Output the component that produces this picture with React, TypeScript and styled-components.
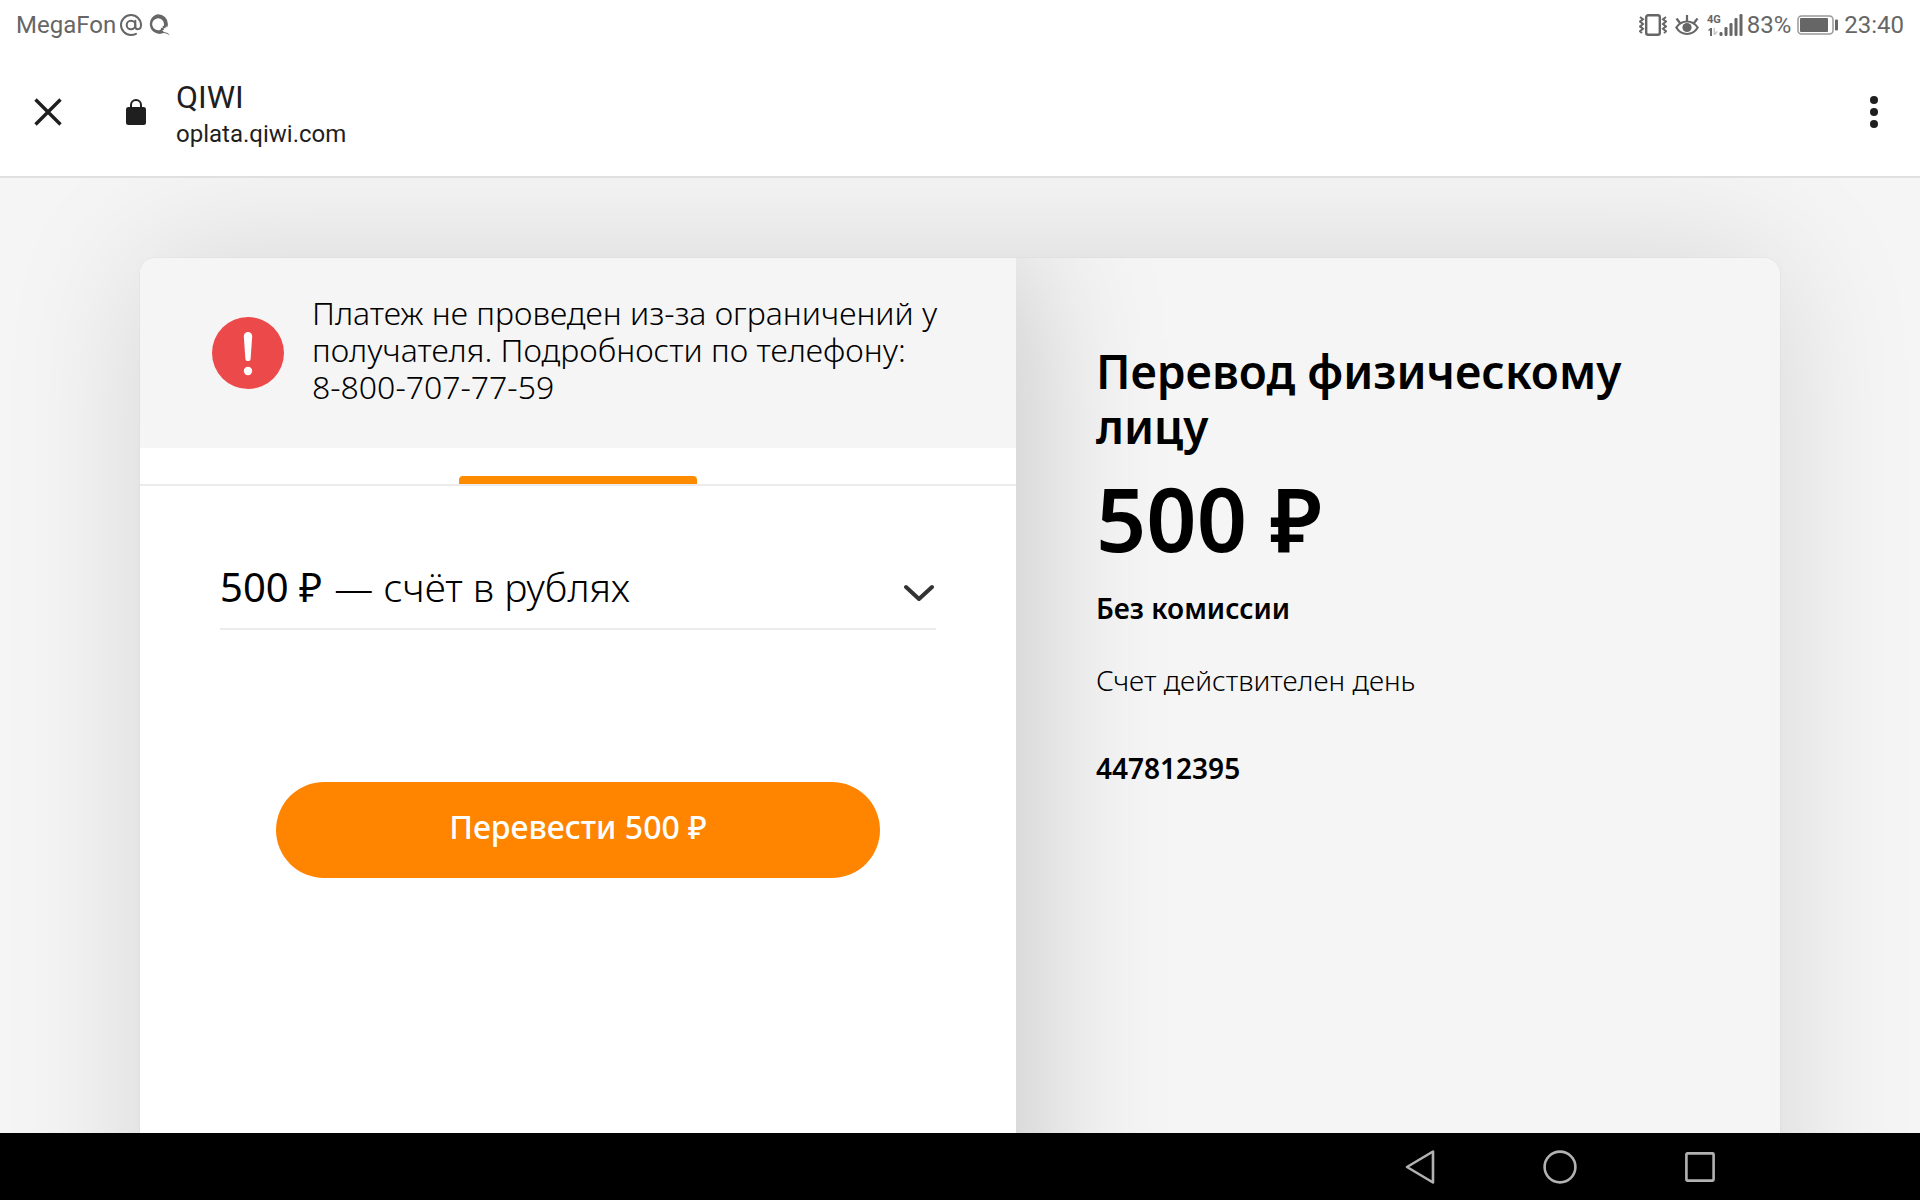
import React from "react";
import styled, { createGlobalStyle } from "styled-components";

const GlobalStyle = createGlobalStyle`
  *, *::before, *::after { box-sizing: border-box; }
  body { margin: 0; background: #f5f5f5; color: #000; }
  h1, p { margin: 0; font-weight: inherit; }
  button { border: 0; padding: 0; background: none; font: inherit; color: inherit; cursor: pointer; }
`;

const pageFont = `"Noto Sans", "Open Sans", sans-serif`;
const systemFont = `Roboto, "Noto Sans", sans-serif`;

const Screen = styled.div`
  display: flex;
  flex-direction: column;
  height: 100vh;
  overflow: hidden;
  font-family: ${pageFont};
  svg { display: block; flex: none; }
`;

const StatusBar = styled.div`
  display: flex;
  justify-content: space-between;
  align-items: center;
  height: 48px;
  padding: 2px 16px 0;
  background: #fff;
  color: #666;
  font: 400 24px/24px ${systemFont};
`;

const StatusGroup = styled.div<{ $gap: number }>`
  display: flex;
  align-items: center;
  gap: ${(p) => p.$gap}px;
`;

const Toolbar = styled.header`
  display: flex;
  align-items: center;
  height: 130px;
  padding: 0 20px 0 22px;
  background: #fff;
  border-bottom: 2px solid #e0e0e0;
  color: #1f1f1f;
  font-family: ${systemFont};
`;

const IconButton = styled.button`
  display: flex;
  align-items: center;
  justify-content: center;
  width: 52px;
  height: 52px;
`;

const Site = styled.div`
  display: flex;
  align-items: center;
  flex: 1;
  gap: 30px;
  padding-left: 52px;
`;

const SiteText = styled.div`
  padding-top: 6px;
`;

const SiteTitle = styled.div`
  font-size: 32px;
  line-height: 38px;
`;

const SiteHost = styled.div`
  font-size: 24px;
  line-height: 36px;
`;

const Page = styled.main`
  display: flex;
  flex-direction: column;
  flex: 1;
  min-height: 0;
  padding: 80px 140px 0;
  overflow: hidden;
`;

const Card = styled.div`
  display: grid;
  grid-template-columns: minmax(0, 876fr) minmax(0, 764fr);
  flex: 1 0 auto;
  min-height: 100vh;
  border-radius: 16px;
  background: #f5f5f5;
  box-shadow: 0 0 0 1px rgba(0, 0, 0, 0.02), 0 0 140px rgba(0, 0, 0, 0.13);
  overflow: hidden;
`;

const Payment = styled.section`
  z-index: 1;
  background: #fff;
  box-shadow: 0 0 140px rgba(0, 0, 0, 0.22);
`;

const Alert = styled.div`
  display: flex;
  align-items: center;
  gap: 28px;
  min-height: 190px;
  padding: 0 76px 0 72px;
  background: #f5f5f5;
`;

const AlertText = styled.p`
  flex: 1;
  padding-bottom: 8px;
  font-size: 32px;
  font-weight: 300;
  line-height: 37px;
`;

const Tabs = styled.div`
  display: flex;
  justify-content: center;
  align-items: flex-end;
  height: 38px;
  border-bottom: 2px solid #ececec;
`;

const ActiveTab = styled.div`
  width: 238px;
  height: 8px;
  border-radius: 4px 4px 0 0;
  background: #ff8c00;
`;

const Form = styled.form`
  display: flex;
  flex-direction: column;
  gap: 152px;
  padding: 71px 80px;
`;

const Account = styled.label`
  display: flex;
  align-items: baseline;
  gap: 12px;
  padding-bottom: 11px;
  border-bottom: 2px solid #ececec;
  font-size: 40px;
  line-height: 60px;
`;

const AccountSum = styled.span`
  font-weight: 400;
  white-space: nowrap;
`;

const AccountSelect = styled.select`
  appearance: none;
  flex: 1;
  min-width: 0;
  height: 60px;
  padding: 0;
  border: 0;
  background: transparent;
  color: inherit;
  font: 300 39px/60px ${pageFont};
`;

const PayButton = styled.button`
  height: 96px;
  margin: 0 56px;
  padding-bottom: 8px;
  border-radius: 48px;
  background: #ff8400;
  color: #fff;
  font-size: 32px;
  font-weight: 500;
`;

const Summary = styled.aside`
  padding: 86px 80px;
`;

const Heading = styled.h1`
  font-size: 46px;
  font-weight: 600;
  line-height: 55px;
`;

const Amount = styled.p`
  margin-top: 20px;
  font-size: 88px;
  font-weight: 600;
  line-height: 88px;
`;

const Detail = styled.p<{ $weight: number; $space: number }>`
  margin-top: ${(p) => p.$space}px;
  font-size: 28px;
  font-weight: ${(p) => p.$weight};
  line-height: 40px;
`;

const SystemNav = styled.nav`
  display: flex;
  justify-content: flex-end;
  align-items: center;
  gap: 88px;
  height: 67px;
  padding-right: 194px;
  background: #000;
`;

const VibrateIcon = () => (
  <svg width="28" height="22" viewBox="0 0 28 22" fill="none" stroke="#666" strokeWidth="2">
    <rect x="7.2" y="1.2" width="13.6" height="19.6" rx="2" strokeWidth="2.4" />
    <path d="M1 3l3 2.200-3 2.400 3 2.400-3 2.400 3 2.400L1 17.200l2 1.800M27 3l-3 2.200 3 2.400-3 2.400 3 2.400-3 2.400 3 2.400-2 1.800" />
  </svg>
);

const EyeIcon = () => (
  <svg width="24" height="22" viewBox="0 0 24 22" fill="none" stroke="#666" strokeWidth="2.2">
    <path d="M1.3 13.5C4 9.5 8 7.5 12 7.5s8 2 10.700 6C20 18 16 20 12 20s-8-2-10.700-6.500z" />
    <path d="M12 1v6M1.500 4.500l3.500 4.500M22.500 4.500L19 9" />
    <circle cx="12" cy="13.5" r="4.6" fill="#666" stroke="none" />
  </svg>
);

const SignalIcon = () => (
  <svg width="36" height="22" viewBox="0 0 36 22" fill="#666">
    <text x="0" y="9" fontFamily="Roboto, sans-serif" fontSize="11" fontWeight="700">4G</text>
    <path d="M3 22v-5.500H.5L3.500 14H5v8z" />
    <path d="M6.500 14H8v3.500h3L8.500 21H6.500z" fill="#ccc" />
    <rect x="12.5" y="18" width="3" height="4" rx="1.2" />
    <rect x="17.5" y="13" width="3" height="9" rx="1.2" />
    <rect x="22.5" y="9" width="3" height="13" rx="1.2" />
    <rect x="27.5" y="4" width="3" height="18" rx="1.2" />
    <rect x="32.5" y="0" width="3" height="22" rx="1.2" />
  </svg>
);

const BatteryIcon = () => (
  <svg width="41" height="20" viewBox="0 0 41 20" fill="none">
    <rect x="1" y="1" width="35" height="18" rx="3.5" stroke="#999" strokeWidth="1.5" />
    <rect x="3" y="3" width="28" height="14" rx="1" fill="#666" />
    <rect x="38" y="4.500" width="3" height="11" rx="1" fill="#666" />
  </svg>
);

const MailIcon = () => (
  <svg width="22" height="22" viewBox="0 0 22 22" fill="none" stroke="#666" strokeWidth="2" strokeLinecap="round">
    <circle cx="11" cy="11" r="4.3" />
    <path d="M15.300 6.700V12c0 2 1 3.200 2.500 3.200S21 13.800 21 11A10 10 0 1 0 11 21c1.800 0 3.400-.4 5-1.200" />
  </svg>
);

const QiwiIcon = () => (
  <svg width="22" height="22" viewBox="0 0 22 22" fill="#666">
    <path
      fillRule="evenodd"
      d="M10 .2a9.900 9.900 0 0 1 9.900 9.900c0 1.200-.2 2.200-.6 3.200l-1.300-1-.6 2-1.700-.4.2 2-1.700.1 1.600 1.900c3 .3 5.200 1.400 6 3.600-1.800-1.600-3.800-2.200-6.300-2.400A9.900 9.900 0 1 1 10 .2zm0 4a6 6 0 1 0 2.600 11.500l.6-2 1.500.2-.1-1.700 1.200-.4c.2-.6.2-1 .2-1.600A6 6 0 0 0 10 4.200z"
    />
  </svg>
);

export default function App() {
  return (
    <Screen>
      <GlobalStyle />
      <StatusBar>
        <StatusGroup $gap={6}>
          <StatusGroup $gap={4}>
            <span>MegaFon</span>
            <MailIcon />
          </StatusGroup>
          <QiwiIcon />
        </StatusGroup>
        <StatusGroup $gap={6}>
          <StatusGroup $gap={8}>
            <VibrateIcon />
            <EyeIcon />
            <StatusGroup $gap={4}>
              <SignalIcon />
              <span>83%</span>
            </StatusGroup>
          </StatusGroup>
          <BatteryIcon />
          <span>23:40</span>
        </StatusGroup>
      </StatusBar>

      <Toolbar>
        <IconButton type="button" aria-label="Закрыть">
          <svg width="28" height="28" viewBox="0 0 28 28" stroke="#1f1f1f" strokeWidth="3.4">
            <path d="M1.500 1.500l25 25M26.500 1.500l-25 25" />
          </svg>
        </IconButton>
        <Site>
          <svg width="20" height="26" viewBox="0 0 20 26" fill="#1f1f1f">
            <rect x="0" y="8" width="20" height="18" rx="2.5" />
            <path d="M5 9V6a5 5 0 0 1 10 0v3" fill="none" stroke="#1f1f1f" strokeWidth="2" />
          </svg>
          <SiteText>
            <SiteTitle>QIWI</SiteTitle>
            <SiteHost>oplata.qiwi.com</SiteHost>
          </SiteText>
        </Site>
        <IconButton type="button" aria-label="Меню">
          <svg width="8" height="32" viewBox="0 0 8 32" fill="#1f1f1f">
            <circle cx="4" cy="4" r="4" />
            <circle cx="4" cy="16" r="4" />
            <circle cx="4" cy="28" r="4" />
          </svg>
        </IconButton>
      </Toolbar>

      <Page>
        <Card>
          <Payment>
            <Alert role="alert">
              <svg width="72" height="72" viewBox="0 0 72 72">
                <circle cx="36" cy="36" r="36" fill="#ec4a4a" />
                <path d="M31.800 19.200a4.200 4.200 0 0 1 8.400 0L38.600 42a2 2 0 0 1-2 2h-1.200a2 2 0 0 1-2-2z" fill="#fff" />
                <circle cx="36" cy="54" r="4.2" fill="#fff" />
              </svg>
              <AlertText>
                Платеж не проведен из-за ограничений у получателя. Подробности по телефону: 8-800-707-77-59
              </AlertText>
            </Alert>
            <Tabs>
              <ActiveTab />
            </Tabs>
            <Form onSubmit={(e) => e.preventDefault()}>
              <Account>
                <AccountSum>500 ₽</AccountSum>
                <AccountSelect>
                  <option>— счёт в рублях</option>
                </AccountSelect>
                <svg width="32" height="18" viewBox="0 0 32 18" fill="none" stroke="#333" strokeWidth="4" strokeLinecap="round" strokeLinejoin="round">
                  <path d="M2 3l13 12L28 3" />
                </svg>
              </Account>
              <PayButton type="submit">Перевести 500 ₽</PayButton>
            </Form>
          </Payment>
          <Summary>
            <Heading>Перевод физическому лицу</Heading>
            <Amount>500 ₽</Amount>
            <Detail $weight={600} $space={26}>Без комиссии</Detail>
            <Detail $weight={300} $space={32}>Счет действителен день</Detail>
            <Detail $weight={600} $space={48}>447812395</Detail>
          </Summary>
        </Card>
      </Page>

      <SystemNav>
        <IconButton type="button" aria-label="Назад">
          <svg width="32" height="36" viewBox="0 0 32 36" fill="none" stroke="#b2b2b2" strokeWidth="2.6" strokeLinejoin="round">
            <path d="M29 2.500v31L3 18z" />
          </svg>
        </IconButton>
        <IconButton type="button" aria-label="Домой">
          <svg width="34" height="34" viewBox="0 0 34 34" fill="none" stroke="#b2b2b2" strokeWidth="2.6">
            <circle cx="17" cy="17" r="15.4" />
          </svg>
        </IconButton>
        <IconButton type="button" aria-label="Недавние">
          <svg width="30" height="30" viewBox="0 0 30 30" fill="none" stroke="#b2b2b2" strokeWidth="2.6">
            <rect x="1.4" y="1.4" width="27.2" height="27.2" rx="1" />
          </svg>
        </IconButton>
      </SystemNav>
    </Screen>
  );
}
